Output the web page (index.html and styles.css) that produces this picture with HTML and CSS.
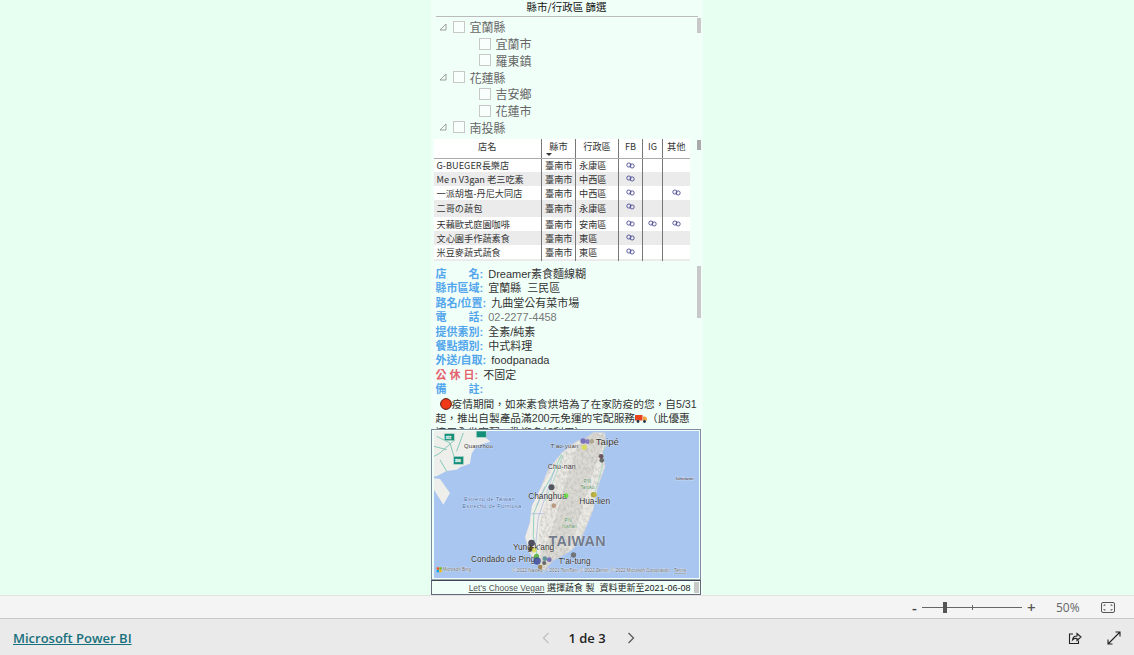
FILE: index.html
```html
<!DOCTYPE html>
<html lang="zh-Hant">
<head>
<meta charset="utf-8">
<title>Power BI Report</title>
<link rel="stylesheet" href="styles.css">
</head>
<body>
<div class="app">
  <main class="canvas">
    <div class="report">
      <h1 class="slicer-title">縣市/行政區 篩選</h1>
      <section class="slicer">
        <div class="node"><svg class="twist" viewBox="0 0 8 8"><path d="M1 7H7V1Z"/></svg><span class="check"></span><span>宜蘭縣</span></div>
        <div class="node child"><span class="check"></span><span>宜蘭市</span></div>
        <div class="node child"><span class="check"></span><span>羅東鎮</span></div>
        <div class="node"><svg class="twist" viewBox="0 0 8 8"><path d="M1 7H7V1Z"/></svg><span class="check"></span><span>花蓮縣</span></div>
        <div class="node child"><span class="check"></span><span>吉安鄉</span></div>
        <div class="node child"><span class="check"></span><span>花蓮市</span></div>
        <div class="node"><svg class="twist" viewBox="0 0 8 8"><path d="M1 7H7V1Z"/></svg><span class="check"></span><span>南投縣</span></div>
        <i class="thumb slicer-thumb"></i>
      </section>

      <section class="table-wrap">
        <table class="stores">
          <colgroup><col class="c-name"><col class="c-city"><col class="c-dist"><col class="c-fb"><col class="c-ig"><col class="c-other"></colgroup>
          <thead>
            <tr><th>店名</th><th class="sorted">縣市<svg class="sort" viewBox="0 0 6 3"><path d="M0 0H6L3 3Z"/></svg></th><th>行政區</th><th>FB</th><th>IG</th><th>其他</th></tr>
          </thead>
          <tbody>
            <tr class="r14"><td>G-BUEGER長樂店</td><td>臺南市</td><td>永康區</td><td class="ic"><svg class="link"><use href="#chain"/></svg></td><td></td><td></td></tr>
            <tr class="r14 alt"><td>Me n V3gan 老三吃素</td><td>臺南市</td><td>中西區</td><td class="ic"><svg class="link"><use href="#chain"/></svg></td><td></td><td></td></tr>
            <tr class="r14"><td>一派胡塩-丹尼大同店</td><td>臺南市</td><td>中西區</td><td class="ic"><svg class="link"><use href="#chain"/></svg></td><td></td><td class="ic"><svg class="link"><use href="#chain"/></svg></td></tr>
            <tr class="r16 alt"><td>二哥の蔬包</td><td>臺南市</td><td>永康區</td><td class="ic"><svg class="link"><use href="#chain"/></svg></td><td></td><td></td></tr>
            <tr class="r14"><td>天藾歐式庭園咖啡</td><td>臺南市</td><td>安南區</td><td class="ic"><svg class="link"><use href="#chain"/></svg></td><td class="ic"><svg class="link"><use href="#chain"/></svg></td><td class="ic"><svg class="link"><use href="#chain"/></svg></td></tr>
            <tr class="r14 alt"><td>文心園手作蔬素食</td><td>臺南市</td><td>東區</td><td class="ic"><svg class="link"><use href="#chain"/></svg></td><td></td><td></td></tr>
            <tr class="r14"><td>米豆麥蔬式蔬食</td><td>臺南市</td><td>東區</td><td class="ic"><svg class="link"><use href="#chain"/></svg></td><td></td><td></td></tr>
            <tr class="r14 alt"><td></td><td></td><td></td><td></td><td></td><td></td></tr>
          </tbody>
        </table>
        <i class="thumb table-thumb"></i>
      </section>

      <section class="detail">
        <p><b>店　　名:</b> Dreamer素食麵線糊</p>
        <p><b>縣市區域:</b> 宜蘭縣&nbsp; 三民區</p>
        <p><b>路名/位置:</b> 九曲堂公有菜市場</p>
        <p><b>電　　話:</b> <span class="muted">02-2277-4458</span></p>
        <p><b>提供素別:</b> 全素/純素</p>
        <p><b>餐點類別:</b> 中式料理</p>
        <p><b>外送/自取:</b> foodpanada</p>
        <p><b class="red">公 休 日:</b> 不固定</p>
        <p><b>備　　註:</b></p>
        <p class="note"><svg class="emoji-dot" viewBox="0 0 12 12"><circle cx="6" cy="6" r="5.4" fill="#f03a17" stroke="#5a1a10" stroke-width="1"/></svg>疫情期間，如來素食烘培為了在家防疫的您，自5/31<br>起，推出自製產品滿200元免運的宅配服務<svg class="emoji-truck" viewBox="0 0 12 9"><rect x="0" y="1" width="7.5" height="5.5" fill="#e8431f"/><path d="M8 2.5H10.5L12 4.5V6.5H8Z" fill="#f2a33a"/><circle cx="3" cy="7.5" r="1.4" fill="#234"/><circle cx="9.5" cy="7.5" r="1.4" fill="#234"/></svg>（此優惠<br>適用全省宅配，歡迎多加利用）</p>
        <i class="thumb detail-thumb"></i>
      </section>

      <section class="map">
        <svg class="map-art" viewBox="12 14 796 441" preserveAspectRatio="none">
          <defs>
            <clipPath id="isle"><path d="M492 18L525 20L528 60L518 78L526 120L508 170L498 205L490 250L470 300L452 340L425 372L402 385L370 402L345 430L332 432L322 410L300 382L286 332L300 290L306 240L330 190L355 130L395 80L440 45L470 34Z"/></clipPath>
            <filter id="terrain" x="0" y="0" width="100%" height="100%">
              <feTurbulence type="fractalNoise" baseFrequency="0.13 0.09" numOctaves="3" seed="7"/>
              <feColorMatrix values="0 0 0 0 .45  0 0 0 0 .44  0 0 0 0 .41  1.3 0 0 0 -.5"/>
            </filter>
          </defs>
          <rect x="12" y="14" width="796" height="441" fill="#a9c6f0"/>
          <path d="M12 14H172L165 32L182 46L140 58L125 82L120 112L92 122L80 130L50 134L20 150L12 150Z" fill="#eeeeea"/>
          <path d="M12 156L30 158L60 200L40 235L12 190Z" fill="#eeeeea"/>
          <path d="M20 30L60 50L75 100M75 40L30 80L12 90M30 100L50 135M100 20L80 75M12 60L50 70" fill="none" stroke="#84c9b8" stroke-width="3"/>
          <path d="M492 18L525 20L528 60L518 78L526 120L508 170L498 205L490 250L470 300L452 340L425 372L402 385L370 402L345 430L332 432L322 410L300 382L286 332L300 290L306 240L330 190L355 130L395 80L440 45L470 34Z" fill="#eceae5" stroke="#d5d3e0" stroke-width="1.5"/>
          <g clip-path="url(#isle)">
            <path d="M500 20L470 90L445 160L425 230L405 300L380 370L350 425" fill="none" stroke="#c4c2bb" stroke-width="70" opacity=".4"/>
            <rect x="280" y="14" width="260" height="425" filter="url(#terrain)"/>
            <path d="M285 340L305 240L345 165L395 85L365 190L335 260L325 340L335 420Z" fill="#f0efea" opacity=".85"/>
          </g>
          <path d="M395 85L365 150L335 205L312 260L310 330L325 400" fill="none" stroke="#93d3bf" stroke-width="3"/>
          <path d="M375 130L350 200L325 275L318 350M345 180L320 240M305 262L345 262" fill="none" stroke="#a5b2de" stroke-width="2"/>
          <path d="M400 85L372 160L345 225M525 60L515 130L495 200" fill="none" stroke="#93d3bf" stroke-width="2"/>
          <rect class="shield" x="43" y="22" width="30" height="21"/>
          <rect class="shield" x="139" y="14" width="30" height="19"/>
          <rect class="shield" x="71" y="90" width="30" height="24"/>
          <text class="t-xs shield-t" x="47" y="38">372</text>
          <text class="t-xs shield-t" x="75" y="107">336</text>
          <text class="t-m" x="102" y="65">Quanzhou</text>
          <text class="t-m" x="362" y="64">T'ao-yüan</text>
          <text class="t-l taipe" x="498" y="56">Taipé</text>
          <text class="t-m big" x="354" y="128">Chu-nan</text>
          <text class="t-l" x="295" y="218">Changhua</text>
          <text class="t-l" x="448" y="233">Hua-lien</text>
          <text class="t-sea" x="102" y="224">Estreito de Taiwan</text>
          <text class="t-sea" x="97" y="244">Estrecho de Formosa</text>
          <text class="t-green" x="462" y="170">P.N.</text>
          <text class="t-green" x="452" y="187">Taroko</text>
          <text class="t-green" x="404" y="287">P.N.</text>
          <text class="t-green" x="394" y="304">Yushan</text>
          <text class="t-island" x="738" y="160">Ishinomi</text>
          <text class="t-country" x="356" y="360">TAIWAN</text>
          <text class="t-l" x="249" y="372">Yung-k'ang</text>
          <text class="t-l" x="123" y="407">Condado de Ping</text>
          <text class="t-l" x="386" y="413">T'ai-tung</text>
          <text class="t-xs" x="248" y="438">© 2022 Navteq, © 2021 TomTom, © 2022 Zenrin, © 2022 Microsoft Corporation</text>
          <text class="t-xs under" x="733" y="438">Terms</text>
          <rect x="20" y="423" width="7" height="7" fill="#f25022"/><rect x="28" y="423" width="7" height="7" fill="#7fba00"/><rect x="20" y="431" width="7" height="7" fill="#00a4ef"/><rect x="28" y="431" width="7" height="7" fill="#ffb900"/>
          <text class="t-xs" x="38" y="435">Microsoft Bing</text>
          <g class="pins">
            <circle cx="460" cy="44" r="8" fill="#6a5fb8"/><circle cx="473" cy="46" r="7" fill="#7a6cc0"/><circle cx="486" cy="45" r="7" fill="#a9a080"/>
            <circle cx="463" cy="63" r="8" fill="#d8dc4a"/><circle cx="514" cy="90" r="7" fill="#5a3c4a"/><circle cx="516" cy="102" r="7" fill="#555"/>
            <circle cx="365" cy="183" r="9" fill="#3c3c48"/><circle cx="409" cy="208" r="7" fill="#62dc3c"/><circle cx="372" cy="238" r="7" fill="#b08c70"/>
            <circle cx="491" cy="205" r="8" fill="#a8a020"/><circle cx="496" cy="205" r="6" fill="#c4b840"/>
            <circle cx="305" cy="350" r="10" fill="#36324a"/><circle cx="303" cy="367" r="8" fill="#4a3a20"/><circle cx="313" cy="372" r="7" fill="#d8dc4a"/>
            <circle cx="320" cy="390" r="8" fill="#50b030"/><circle cx="322" cy="404" r="11" fill="#3a4a9a"/><circle cx="345" cy="397" r="7" fill="#4a8a90"/><circle cx="358" cy="400" r="7" fill="#6a5fb8"/><circle cx="343" cy="410" r="6" fill="#555"/><circle cx="331" cy="422" r="7" fill="#98763c"/>
            <circle cx="431" cy="386" r="8" fill="#666"/>
          </g>
        </svg>
      </section>

      <footer class="credit">
        <span><a class="credit-link">Let's Choose Vegan</a> 選擇蔬食 製&nbsp; 資料更新至2021-06-08</span>
        <i class="credit-thumb"></i>
      </footer>
    </div>
  </main>

  <div class="zoombar">
    <span class="zoom-btn minus">-</span>
    <div class="slider"><i class="tick"></i><i class="handle"></i></div>
    <span class="zoom-btn plus">+</span>
    <span class="zoom-val">50%</span>
    <svg class="fit" viewBox="0 0 14 11"><rect x=".5" y=".5" width="13" height="10" rx="1.5"/><path d="M3 4V3H4.5M11 4V3H9.5M3 7V8H4.5M11 7V8H9.5"/></svg>
  </div>

  <footer class="pbibar">
    <a class="brand">Microsoft Power BI</a>
    <nav class="pager">
      <svg class="chev off" viewBox="0 0 8 12"><path d="M6.5 1L1.5 6L6.5 11"/></svg>
      <span class="page">1 de 3</span>
      <svg class="chev next" viewBox="0 0 8 12"><path d="M1.5 1L6.5 6L1.5 11"/></svg>
    </nav>
    <div class="actions">
      <svg class="act" viewBox="0 0 14 14"><path d="M5 3H1.5V12.5H10.5V9.5"/><path d="M4.5 9C4.8 6.5 6.5 5 9 5V2.5L13 6L9 9.5V7.5C7 7.2 5.5 7.8 4.5 9Z"/></svg>
      <svg class="act" viewBox="0 0 14 14"><path d="M8.5 1H13V5.5M13 1L1 13M1 8.5V13H5.5"/></svg>
    </div>
  </footer>
</div>
<svg class="defs" aria-hidden="true"><defs><symbol id="chain" viewBox="0 0 10 7"><circle cx="3.2" cy="3" r="2.3" fill="none" stroke="#3a3a8c" stroke-width=".9"/><circle cx="6.8" cy="4" r="2.3" fill="none" stroke="#3a3a8c" stroke-width=".9"/></symbol></defs></svg>
</body>
</html>
```

FILE: styles.css
```css
* { box-sizing: border-box; }
html, body { margin: 0; height: 100%; overflow: hidden; }
body { font-family: "Liberation Sans", "Noto Sans CJK TC", sans-serif; color: #222; }
.defs { width: 0; height: 0; display: block; }

.app { height: 655px; display: flex; flex-direction: column; }
.canvas { height: 596px; flex: none; background: #e6fff0; display: flex; justify-content: center; overflow: hidden; padding-right: 1px; border-bottom: 1px solid #e2e2e2; }
.report { width: 272px; height: 595px; background: #f1fff9; display: flex; flex-direction: column; flex: none; }

.slicer-title { margin: 0 0 0 5px; width: 262px; height: 17px; font-size: 10.5px; font-weight: 400; line-height: 14px; text-align: center; color: #111; border-bottom: 1px solid #bbb; font-family: "Noto Sans CJK TC", sans-serif; }

.slicer { position: relative; height: 117px; margin-bottom: 5px; padding: 1.5px 0 0 8px; overflow: hidden; flex: none; }
.node { height: 16.75px; display: flex; align-items: center; font-size: 12px; color: #666; font-family: "Noto Sans CJK TC", sans-serif; gap: 5px; }
.node .check { width: 12px; height: 12px; border: 1px solid #c8c8c8; background: #f8fffc; flex: none; }
.twist { width: 8px; height: 8px; margin-right: 1px; fill: none; stroke: #888; stroke-width: .8; flex: none; }
.child { padding-left: 40px; }

.thumb { position: absolute; display: block; background: #c8c8c8; width: 4px; }
.slicer-thumb { right: 2px; top: 1px; height: 15px; }

.table-wrap { position: relative; height: 122px; padding: 0 0 0 3px; flex: none; overflow: hidden; }
.stores { border-collapse: collapse; table-layout: fixed; width: 256px; background: #fff; font-size: 9.2px; font-family: "Noto Sans CJK TC", sans-serif; color: #333; }
.c-name { width: 108px; }
.c-city { width: 34px; }
.c-dist { width: 43px; }
.c-fb { width: 24px; }
.c-ig { width: 20px; }
.c-other { width: 27px; }
.stores th { height: 19px; font-weight: 400; font-size: 9.2px; padding: 0 0 5px; line-height: 10px; border-bottom: 1px solid #aaa; text-align: center; position: relative; }
.stores th + th, .stores td + td { border-left: 1px solid #777; }
.stores td { padding: 1px 2px 0 3px; line-height: 11px; overflow: hidden; white-space: nowrap; }
.stores td.ic { text-align: center; padding: 0; line-height: 8px; vertical-align: top; }
.r14 td { height: 14px; }
.r16 td { height: 16.5px; }
.alt { background: #ebebec; }
.link { width: 9px; height: 7px; display: inline-block; margin-top: 3px; }
.sort { position: absolute; left: 4px; bottom: 2px; width: 6px; height: 3px; fill: #333; }
.table-thumb { right: 2px; top: 1px; height: 10px; background: #aaa; }

.detail { position: relative; height: 163px; margin-top: 5px; padding: 1px 0 0 5px; overflow: hidden; flex: none; font-size: 11px; line-height: 14.4px; color: #333; font-family: "Liberation Sans", "Noto Sans CJK TC", sans-serif; }
.detail p { margin: 0; }
.detail b { color: #54a6ec; font-weight: 700; margin-right: 2px; }
.detail b.red { color: #e2626e; }
.muted { color: #777; }
.detail .note { width: 266px; text-indent: 4px; white-space: nowrap; font-size: 10.7px; }
.emoji-dot { width: 12px; height: 12px; vertical-align: -2px; }
.emoji-truck { width: 12px; height: 9px; vertical-align: -1px; }
.detail-thumb { right: 2px; top: 0; height: 52px; }

.map { width: 270px; height: 151px; border: 1px solid #7e8b9a; border-bottom-color: #9aa; padding: 1px 1px 1px 2px; flex: none; background: #f1fff9; }
.map-art { display: block; width: 265px; height: 147px; }
.map text { font-family: "Liberation Sans", sans-serif; paint-order: stroke; stroke: rgba(255,255,255,.65); stroke-width: 2px; }
.t-xs { font-size: 13.5px; fill: #666; }
.shield-t { fill: #fff; font-size: 10px; }
.t-island { font-size: 13px; font-weight: 700; fill: #556; }
.under { text-decoration: underline; }
.t-m { font-size: 18px; fill: #333; letter-spacing: .5px; }
.big { font-size: 21px; }
.t-l { font-size: 25px; fill: #333; }
.taipe { font-size: 29px; }
.t-sea { font-size: 17px; fill: #3d6aa8; letter-spacing: .8px; }
.t-green { font-size: 14px; fill: #4f8a55; }
.t-country { font-size: 43px; font-weight: 700; fill: #727b8b; letter-spacing: 1px; }
.shield { fill: #14907a; stroke: #b9d8cf; stroke-width: 2; }
.pins circle { opacity: .85; }

.credit { position: relative; width: 270px; height: 15px; border: 1px solid #667; border-top-color: #445; display: flex; justify-content: flex-end; align-items: center; padding-right: 9px; font-size: 9px; color: #222; font-family: "Liberation Sans", "Noto Sans CJK TC", sans-serif; flex: none; }
.credit-link { color: #555; text-decoration: underline; font-size: 8.5px; }
.credit-thumb { position: absolute; right: 1px; top: 1px; width: 5px; height: 11px; background: #c8c8c8; }

.zoombar { height: 22px; flex: none; background: #f4f4f4; display: flex; align-items: center; font-family: "Open Sans", sans-serif; color: #555; padding-left: 912px; }
.zoom-btn { font-size: 15px; font-weight: 600; line-height: 20px; width: 10px; }
.minus { color: #444; }
.plus { margin-left: 5px; color: #555; }
.slider { position: relative; width: 100px; height: 1px; background: #666; }
.tick { position: absolute; left: 50px; top: -2px; width: 1px; height: 5px; background: #666; }
.handle { position: absolute; left: 21px; top: -5px; width: 4px; height: 11px; background: #555; }
.zoom-val { font-size: 12px; margin-left: 19px; width: 34px; color: #666; }
.fit { width: 14px; height: 11px; margin-left: 11px; fill: none; stroke: #555; stroke-width: 1; }

.pbibar { flex: 1; display: grid; grid-template-columns: 1fr auto 1fr; align-items: center; background: #eaeaea; border-top: 1px solid #c8c8c8; padding: 1px 13px 0; font-family: "Open Sans", sans-serif; }
.brand { font-size: 13px; font-weight: 600; color: #17707c; text-decoration: underline; justify-self: start; }
.pager { display: flex; align-items: center; gap: 20px; margin-left: 43px; }
.page { font-size: 13px; font-weight: 600; color: #222; }
.chev { width: 8px; height: 12px; fill: none; stroke: #5a5a5a; stroke-width: 1.3; }
.chev.off { stroke: #c2c2c2; margin-right: -2px; }
.chev.next { margin-left: 1px; }
.actions { justify-self: end; display: flex; gap: 25px; }
.act { width: 14px; height: 14px; fill: none; stroke: #222; stroke-width: 1.1; }
```
